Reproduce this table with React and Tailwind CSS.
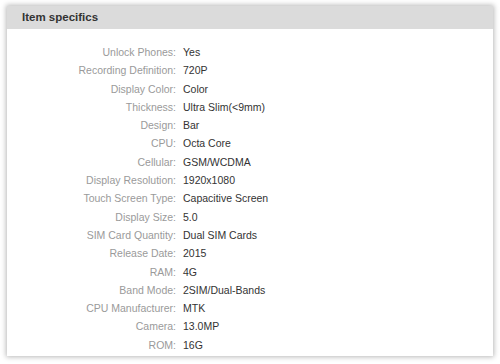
const specs = [
  ["Unlock Phones", "Yes"],
  ["Recording Definition", "720P"],
  ["Display Color", "Color"],
  ["Thickness", "Ultra Slim(<9mm)"],
  ["Design", "Bar"],
  ["CPU", "Octa Core"],
  ["Cellular", "GSM/WCDMA"],
  ["Display Resolution", "1920x1080"],
  ["Touch Screen Type", "Capacitive Screen"],
  ["Display Size", "5.0"],
  ["SIM Card Quantity", "Dual SIM Cards"],
  ["Release Date", "2015"],
  ["RAM", "4G"],
  ["Band Mode", "2SIM/Dual-Bands"],
  ["CPU Manufacturer", "MTK"],
  ["Camera", "13.0MP"],
  ["ROM", "16G"],
];

export default function App() {
  return (
    <div
      className="w-[500px] h-[364px] bg-white pt-[6px] pl-[7px] overflow-hidden"
      style={{ fontFamily: '"Liberation Sans", Arial, sans-serif' }}
    >
      <div className="w-[486px] h-[350px] bg-white shadow-[0_0_5px_1px_rgba(0,0,0,0.28)] flex flex-col">
        <div className="h-[23px] bg-[#dbdbdb] flex items-center pl-[15px]">
          <span className="text-[11.5px] font-bold text-[#333]">Item specifics</span>
        </div>
        <div className="pt-[14px] grid grid-cols-[169px_1fr] gap-x-[7px] text-[10.5px] leading-[18.3px]">
          {specs.map(([k, v]) => (
            <div key={k} className="contents">
              <div className="text-right text-[#9a9a9a]">{k}:</div>
              <div className="text-[#333]">{v}</div>
            </div>
          ))}
        </div>
      </div>
    </div>
  );
}
